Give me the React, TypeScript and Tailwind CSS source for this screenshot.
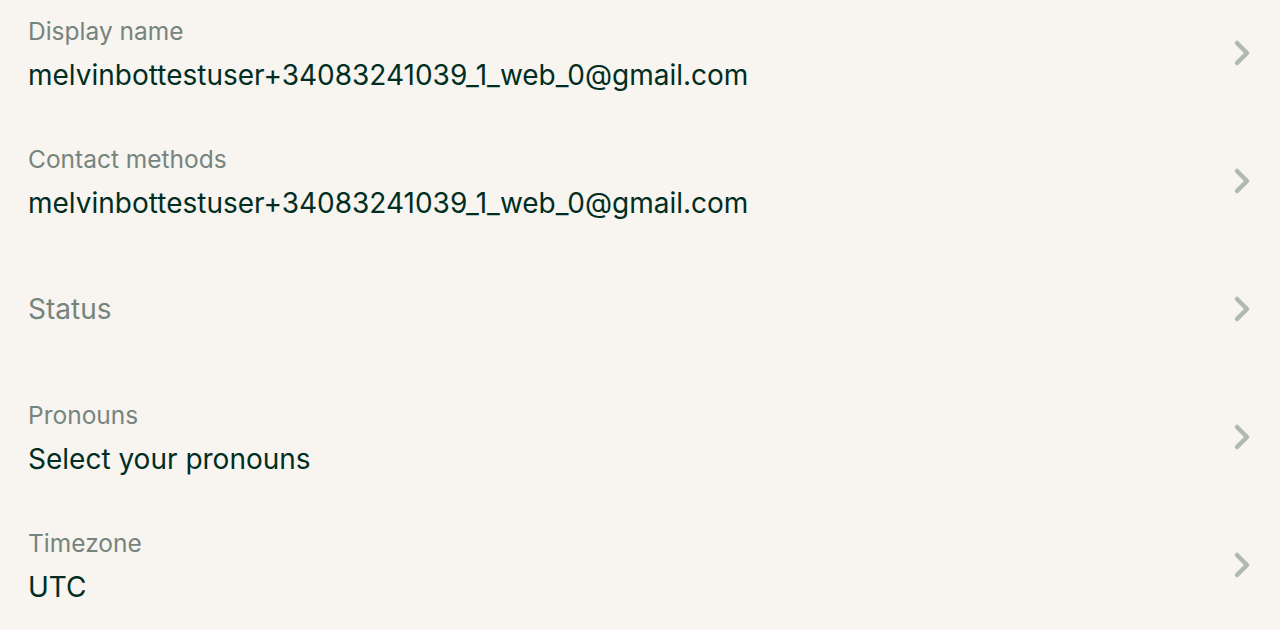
import React from 'react';

type Row = { label: string; value?: string };

const rows: Row[] = [
  { label: 'Display name', value: 'melvinbottestuser+34083241039_1_web_0@gmail.com' },
  { label: 'Contact methods', value: 'melvinbottestuser+34083241039_1_web_0@gmail.com' },
  { label: 'Status' },
  { label: 'Pronouns', value: 'Select your pronouns' },
  { label: 'Timezone', value: 'UTC' },
];

function Chevron() {
  return (
    <svg width="20" height="30" viewBox="0 0 20 30" fill="none">
      <path d="M5 5 L15 15 L5 25" stroke="#afbbb0" strokeWidth="4.5" strokeLinecap="round" strokeLinejoin="round" />
    </svg>
  );
}

export default function App() {
  return (
    <div
      className="w-[1280px] h-[630px] overflow-hidden bg-[#f8f4f0]"
      style={{ fontFamily: 'Inter, "Liberation Sans", sans-serif' }}
    >
      <div className="-mt-[11px] flex flex-col">
        {rows.map((row) => (
          <div key={row.label} className="h-[128px] flex items-center pl-[28px] pr-[28px]">
            <div className="flex-1 flex flex-col">
              {row.value ? (
                <>
                  <span className="text-[24.5px] leading-[30px] text-[#76847e]">{row.label}</span>
                  <span className="mt-[14px] text-[28px] leading-[30px] text-[#002e22]">{row.value}</span>
                </>
              ) : (
                <span className="text-[28px] leading-[30px] text-[#76847e]">{row.label}</span>
              )}
            </div>
            <Chevron />
          </div>
        ))}
      </div>
    </div>
  );
}
